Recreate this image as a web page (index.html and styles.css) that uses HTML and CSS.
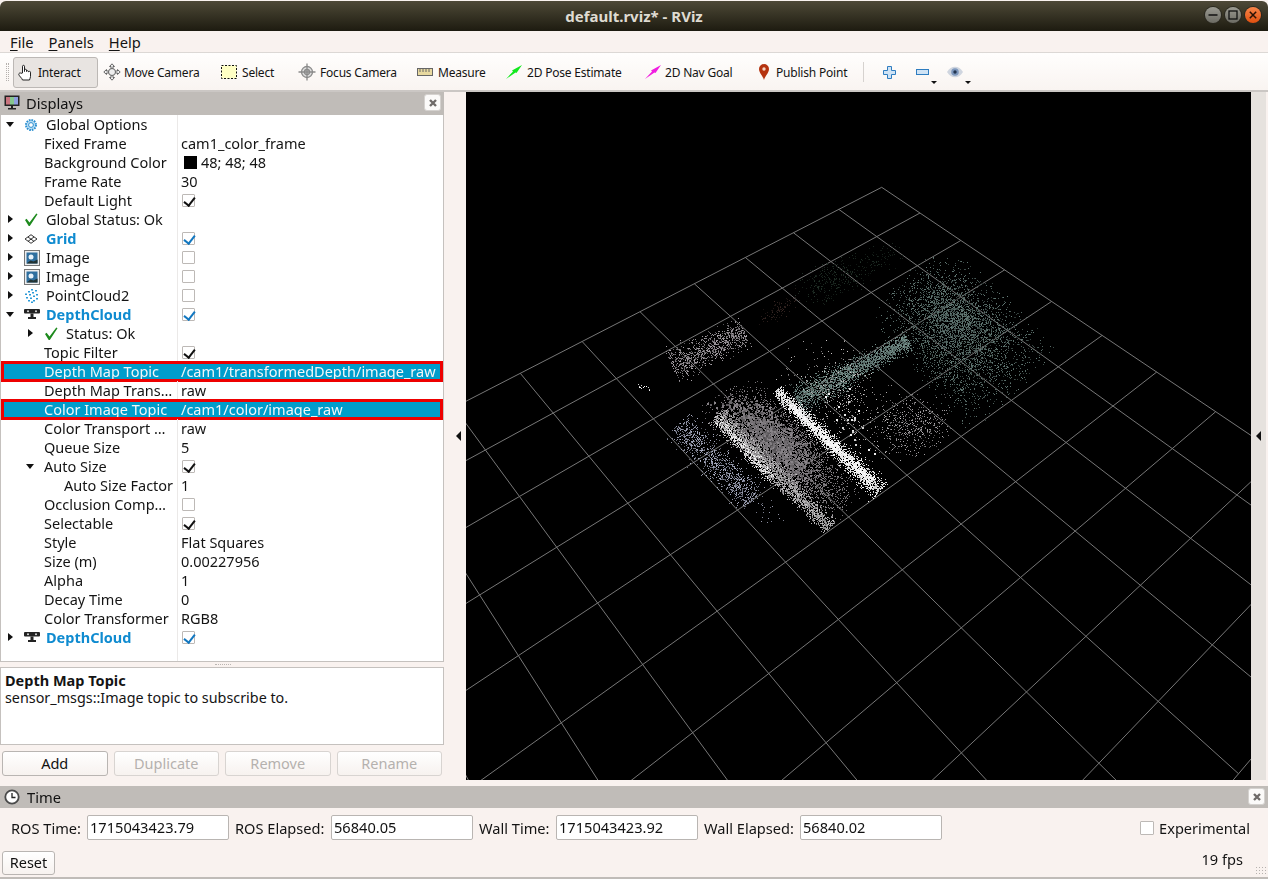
FILE: index.html
```html
<!DOCTYPE html>
<html lang="en">
<head>
<meta charset="utf-8">
<title>default.rviz* - RViz</title>
<link rel="stylesheet" href="styles.css">
</head>
<body>
<div class="window">
  <header class="titlebar">
    <div class="title">default.rviz* - RViz</div>
    <div class="wm">
      <span class="wmb"><svg width="16" height="16" viewBox="0 0 16 16"><path d="M3.5 8h9" stroke="#111" stroke-width="1.5"/></svg></span>
      <span class="wmb"><svg width="16" height="16" viewBox="0 0 16 16"><rect x="4" y="4" width="8" height="8" fill="none" stroke="#111" stroke-width="1.3"/></svg></span>
      <span class="wmb close"><svg width="16" height="16" viewBox="0 0 16 16"><path d="M4.8 4.8l6.4 6.4M11.2 4.8l-6.4 6.4" stroke="#2a1206" stroke-width="1.5"/></svg></span>
    </div>
  </header>
  <nav class="menubar">
    <span class="menu"><u>F</u>ile</span><span class="menu"><u>P</u>anels</span><span class="menu"><u>H</u>elp</span>
  </nav>
  <div class="toolbar">
    <span class="grip"></span>
    <div class="tool active t-interact"><svg width="16" height="17" viewBox="0 0 16 17"><path d="M4.5 9V2.2c0-1.2 2-1.2 2 0V7.500V6c0-1 2-1 2 0v1.500c0-1 2-1 2 0V8c0-.9 2-.9 2 .2v4.300c0 1.500-.8 2.200-1 3.500H4.500C4 14 1 12 .8 10.500c-.2-1.400 1.500-2 2.200-1.200z" fill="#fff" stroke="#222" stroke-width="1"/></svg><span>Interact</span></div>
    <div class="tool t-move"><svg width="18" height="18" viewBox="0 0 18 18"><g fill="#eee" stroke="#666" stroke-width="1"><path d="M9 .8l2.500 2.700H10V6H8V3.500H6.500zM9 17.200l2.500-2.700H10V12H8v2.500H6.500zM.8 9l2.700-2.500V8H6v2H3.500v1.500zM17.200 9l-2.700-2.500V8H12v2h2.500v1.500z"/><circle cx="9" cy="9" r="3.500"/></g></svg><span>Move Camera</span></div>
    <div class="tool t-select"><svg width="16" height="14" viewBox="0 0 16 14"><rect x=".5" y=".5" width="15" height="13" fill="#ffffc4" stroke="#111" stroke-dasharray="2 1.500"/></svg><span>Select</span></div>
    <div class="tool t-focus"><svg width="18" height="18" viewBox="0 0 18 18"><g fill="none" stroke="#8a8a8a" stroke-width="1.300"><circle cx="9" cy="9" r="5.500" fill="#ddd"/><path d="M9 .5v17M.5 9h17"/><circle cx="9" cy="9" r="2.500"/></g></svg><span>Focus Camera</span></div>
    <div class="tool t-measure"><svg width="16" height="8" viewBox="0 0 16 8"><rect x=".5" y=".5" width="15" height="7" fill="#e8d9a0" stroke="#666"/><path d="M3 1v3M6 1v3M9 1v3M12 1v3" stroke="#666"/></svg><span>Measure</span></div>
    <div class="tool t-pose"><svg width="16" height="14" viewBox="0 0 16 14"><path d="M0 14L7 6.500 6 5.500 16 0 10.500 8 9.500 7.500z" fill="#12e81e"/></svg><span>2D Pose Estimate</span></div>
    <div class="tool t-nav"><svg width="16" height="14" viewBox="0 0 16 14"><path d="M0 14L7 6.500 6 5.500 16 0 10.500 8 9.500 7.500z" fill="#f01ee0"/></svg><span>2D Nav Goal</span></div>
    <div class="tool t-pin"><svg width="10" height="16" viewBox="0 0 10 16"><path d="M5 16C4 12 0 9 0 5a5 5 0 0 1 10 0c0 4-4 7-5 11z" fill="#b5330f"/><circle cx="5" cy="5" r="1.700" fill="#f6d6c4"/></svg><span>Publish Point</span></div>
    <span class="tsep"></span>
    <div class="tb t-plus"><svg width="13" height="13" viewBox="0 0 13 13"><path d="M4.500.5h4v4h4v4h-4v4h-4v-4h-4v-4h4z" fill="#cfe3f5" stroke="#2f7dc0"/></svg></div>
    <div class="tb t-minus"><svg width="13" height="6" viewBox="0 0 13 6"><rect x=".5" y=".5" width="12" height="5" fill="#cfe3f5" stroke="#2f7dc0"/></svg><i class="drop"></i></div>
    <div class="tb t-eye"><svg width="16" height="12" viewBox="0 0 16 12"><path d="M0 6c4-7 12-7 16 0-4 7-12 7-16 0z" fill="#cfd5df"/><circle cx="8" cy="6" r="3.800" fill="#7d97bd"/><circle cx="8" cy="6" r="1.700" fill="#22344f"/></svg><i class="drop"></i></div>
  </div>

  <main class="main">
    <section class="left">
      <div class="dock-head">
        <svg class="dock-ico" width="16" height="15" viewBox="0 0 16 15"><rect x=".5" y=".5" width="15" height="10.500" fill="#222"/><rect x="2" y="2" width="4" height="7.500" fill="#c9747e"/><rect x="6" y="2" width="4" height="7.500" fill="#86c78e"/><rect x="10" y="2" width="4" height="7.500" fill="#8e9fe0"/><path d="M7 11h2v2h3v1.500H4V13h3z" fill="#222"/></svg>
        <span class="dock-title">Displays</span>
        <span class="dock-x"><svg width="10" height="10" viewBox="0 0 10 10"><path d="M2 2l6 6M8 2l-6 6" stroke="#6e6a68" stroke-width="2.400"/></svg></span>
      </div>
      <div class="tree">
        <div class="row"><div class="name lv0"><i class="tw down"></i><span class="ic"><svg width="14" height="14" viewBox="0 0 14 14"><circle cx="7" cy="7" r="5" fill="#bfe0f5" stroke="#2b8fd0" stroke-width="2" stroke-dasharray="1.600 1"/><circle cx="7" cy="7" r="2.400" fill="#fff" stroke="#2b8fd0"/></svg></span><span>Global Options</span></div><div class="val"></div></div>
        <div class="row"><div class="name prop">Fixed Frame</div><div class="val">cam1_color_frame</div></div>
        <div class="row"><div class="name prop">Background Color</div><div class="val"><i class="swatch"></i>48; 48; 48</div></div>
        <div class="row"><div class="name prop">Frame Rate</div><div class="val">30</div></div>
        <div class="row"><div class="name prop">Default Light</div><div class="val"><i class="cb on"></i></div></div>
        <div class="row"><div class="name lv0"><i class="tw right"></i><span class="ic"><svg class="okic" width="14" height="13" viewBox="0 0 14 13"><path d="M1 7l1.600-1.200 2.900 3.700L12.300.5l1.200.7L5.800 13H4.700z" fill="#1d8a1d"/></svg></span><span>Global Status: Ok</span></div><div class="val"></div></div>
        <div class="row"><div class="name lv0"><i class="tw right"></i><span class="ic"><svg width="14" height="10" viewBox="0 0 14 10"><path d="M7 .7l6 4.300-6 4.300L1 5zM4 3l6 4.300M10 3L4 7.300" fill="none" stroke="#333"/></svg></span><b class="on-name">Grid</b></div><div class="val"><i class="cb blue"></i></div></div>
        <div class="row"><div class="name lv0"><i class="tw right"></i><span class="ic"><svg width="16" height="16" viewBox="0 0 16 16"><rect x=".5" y=".5" width="15" height="15" fill="#eee" stroke="#777"/><rect x="2.500" y="2.500" width="11" height="11" fill="#2f6f9f"/><circle cx="7" cy="7" r="2.500" fill="#e8f2fa"/><path d="M2.500 13.500l4-3 3 1 4-2v4z" fill="#233"/></svg></span><span>Image</span></div><div class="val"><i class="cb"></i></div></div>
        <div class="row"><div class="name lv0"><i class="tw right"></i><span class="ic"><svg width="16" height="16" viewBox="0 0 16 16"><rect x=".5" y=".5" width="15" height="15" fill="#eee" stroke="#777"/><rect x="2.500" y="2.500" width="11" height="11" fill="#2f6f9f"/><circle cx="7" cy="7" r="2.500" fill="#e8f2fa"/><path d="M2.500 13.500l4-3 3 1 4-2v4z" fill="#233"/></svg></span><span>Image</span></div><div class="val"><i class="cb"></i></div></div>
        <div class="row"><div class="name lv0"><i class="tw right"></i><span class="ic"><svg width="15" height="14" viewBox="0 0 15 14" fill="#2a9ad8"><rect x="7" y="0" width="2" height="1.500"/><rect x="11" y="1" width="2" height="1.500"/><rect x="4" y="2" width="2" height="1.500"/><rect x="8" y="3" width="2" height="1.500"/><rect x="1" y="4.500" width="2" height="1.500"/><rect x="5" y="5" width="2" height="1.500"/><rect x="12" y="5" width="2" height="1.500"/><rect x="9" y="6.500" width="2" height="1.500"/><rect x="2" y="8" width="2" height="1.500"/><rect x="6" y="8.500" width="2" height="1.500"/><rect x="12" y="9" width="2" height="1.500"/><rect x="4" y="11" width="2" height="1.500"/><rect x="9" y="11" width="2" height="1.500"/><rect x="7" y="12.500" width="2" height="1.500"/></svg></span><span>PointCloud2</span></div><div class="val"><i class="cb"></i></div></div>
        <div class="row"><div class="name lv0"><i class="tw down"></i><span class="ic"><svg width="16" height="11" viewBox="0 0 16 11"><rect x="0" y="0" width="16" height="4.500" rx="1" fill="#222"/><circle cx="4" cy="2.200" r="1" fill="#ddd"/><circle cx="12" cy="2.200" r="1" fill="#ddd"/><path d="M6.500 4.500h3V8H12v2H4V8h2.500z" fill="#222"/></svg></span><b class="on-name">DepthCloud</b></div><div class="val"><i class="cb blue"></i></div></div>
        <div class="row"><div class="name lv1"><i class="tw right"></i><span class="ic"><svg class="okic" width="14" height="13" viewBox="0 0 14 13"><path d="M1 7l1.600-1.200 2.900 3.700L12.300.5l1.200.7L5.800 13H4.700z" fill="#1d8a1d"/></svg></span><span>Status: Ok</span></div><div class="val"></div></div>
        <div class="row"><div class="name prop">Topic Filter</div><div class="val"><i class="cb on"></i></div></div>
        <div class="row sel"><div class="name prop">Depth Map Topic</div><div class="val">/cam1/transformedDepth/image_raw</div></div>
        <div class="row"><div class="name prop">Depth Map Trans…</div><div class="val">raw</div></div>
        <div class="row sel"><div class="name prop">Color Image Topic</div><div class="val">/cam1/color/image_raw</div></div>
        <div class="row"><div class="name prop">Color Transport …</div><div class="val">raw</div></div>
        <div class="row"><div class="name prop">Queue Size</div><div class="val">5</div></div>
        <div class="row"><div class="name lv1"><i class="tw down"></i><span class="noic">Auto Size</span></div><div class="val"><i class="cb on"></i></div></div>
        <div class="row"><div class="name prop2">Auto Size Factor</div><div class="val">1</div></div>
        <div class="row"><div class="name prop">Occlusion Comp…</div><div class="val"><i class="cb"></i></div></div>
        <div class="row"><div class="name prop">Selectable</div><div class="val"><i class="cb on"></i></div></div>
        <div class="row"><div class="name prop">Style</div><div class="val">Flat Squares</div></div>
        <div class="row"><div class="name prop">Size (m)</div><div class="val">0.00227956</div></div>
        <div class="row"><div class="name prop">Alpha</div><div class="val">1</div></div>
        <div class="row"><div class="name prop">Decay Time</div><div class="val">0</div></div>
        <div class="row"><div class="name prop">Color Transformer</div><div class="val">RGB8</div></div>
        <div class="row"><div class="name lv0"><i class="tw right"></i><span class="ic"><svg width="16" height="11" viewBox="0 0 16 11"><rect x="0" y="0" width="16" height="4.500" rx="1" fill="#222"/><circle cx="4" cy="2.200" r="1" fill="#ddd"/><circle cx="12" cy="2.200" r="1" fill="#ddd"/><path d="M6.500 4.500h3V8H12v2H4V8h2.500z" fill="#222"/></svg></span><b class="on-name">DepthCloud</b></div><div class="val"><i class="cb blue"></i></div></div>
        <div class="row fill"><div class="name"></div><div class="val"></div></div>
      </div>
      <div class="vgrip"></div>
      <div class="desc"><b>Depth Map Topic</b><br>sensor_msgs::Image topic to subscribe to.</div>
      <div class="btns">
        <button class="btn">Add</button>
        <button class="btn off">Duplicate</button>
        <button class="btn off">Remove</button>
        <button class="btn off">Rename</button>
      </div>
    </section>
    <div class="hleft"><i class="ar-l"></i></div>
    <canvas id="view" width="785" height="688"></canvas>
    <div class="hright"><i class="ar-l"></i></div>
  </main>

  <section class="time">
    <div class="time-head">
      <svg width="16" height="16" viewBox="0 0 16 16"><circle cx="8" cy="8" r="6.700" fill="#fff" stroke="#4a4a4a" stroke-width="1.800"/><path d="M8 4v4.500h3.500" fill="none" stroke="#222" stroke-width="1.300"/></svg>
      <span class="dock-title">Time</span>
      <span class="dock-x"><svg width="10" height="10" viewBox="0 0 10 10"><path d="M2 2l6 6M8 2l-6 6" stroke="#6e6a68" stroke-width="2.400"/></svg></span>
    </div>
    <div class="time-row">
      <label class="tl">ROS Time:</label><input class="ti" value="1715043423.79">
      <label class="tl wide">ROS Elapsed:</label><input class="ti" value="56840.05">
      <label class="tl wall">Wall Time:</label><input class="ti" value="1715043423.92">
      <label class="tl wide">Wall Elapsed:</label><input class="ti" value="56840.02">
      <span class="exp"><i class="cb big"></i>Experimental</span>
    </div>
    <div class="time-foot">
      <button class="btn reset">Reset</button>
      <span class="fps">19 fps</span>
      <i class="sizegrip"></i>
    </div>
  </section>
</div>
<script src="view.js"></script>
</body>
</html>
```
FILE: styles.css
```css
* { box-sizing: border-box; }
html, body { margin: 0; height: 879px; overflow: hidden; background: #2b2a22; }
body { font-family: "Noto Sans", "Open Sans", sans-serif; font-size: 14.500px; color: #141414; }
.window { width: 1268px; height: 879px; display: flex; flex-direction: column; background: #f9f2ef; }

.titlebar { height: 30px; flex: none; display: flex; align-items: center; justify-content: center; position: relative; border-radius: 6px 6px 0 0; background: linear-gradient(#4e4938, #3f3b2b 30%, #1d1b10); margin-top: 1px; }
.title { font-weight: 700; font-size: 15px; color: #dfdbd2; }
.wm { position: absolute; right: 7px; top: 6px; display: flex; gap: 4px; }
.wmb { width: 16px; height: 16px; border-radius: 50%; background: linear-gradient(#9b9a92, #6c6b63); box-shadow: 0 0 0 1px #2a2820; }
.wmb.close { background: linear-gradient(#f8854a, #e0500f); }
.wmb svg { display: block; }

.menubar { height: 22px; flex: none; display: flex; align-items: center; padding-left: 10px; gap: 15px; border-bottom: 1px solid #dcd8d5; font-size: 14.700px; }
.menu u { text-underline-offset: 2px; }

.toolbar { height: 39px; flex: none; display: flex; align-items: center; position: relative; background: linear-gradient(#fffefd, #f9f4f1); border-bottom: 2px solid #cbc7c4; font-size: 12px; letter-spacing: -.2px; padding-top: 1px; }
.grip { width: 3px; height: 18px; margin-left: 6px; margin-right: 4px; border-left: 1px dotted #b5b1ae; border-right: 1px dotted #b5b1ae; }
.tool { display: flex; align-items: center; gap: 3px; height: 31px; white-space: nowrap; }
.tool.active { background: #e8e4e1; border: 1px solid #bcb8b5; border-radius: 3px; width: 85px; padding-left: 4px; }
.t-interact { gap: 4px; }
.t-move { margin-left: 5px; width: 118px; }
.t-select { width: 77px; gap: 5px; }
.t-focus { width: 119px; gap: 4px; }
.t-measure { width: 89px; gap: 5px; }
.t-pose { width: 139px; gap: 5px; }
.t-nav { width: 109px; gap: 4px; }
.t-pin { margin-left: 5px; gap: 7px; width: 104px; }
.tsep { width: 1px; height: 20px; background: #d6d2cf; }
.tb { position: relative; height: 20px; display: flex; align-items: center; }
.t-plus { margin-left: 19px; }
.t-minus { margin-left: 20px; }
.t-eye { margin-left: 18px; }
.drop { position: absolute; right: -8px; bottom: -2px; border: 3px solid transparent; border-top: 3px solid #111; border-bottom: 0; width: 0; height: 0; border-left-width: 3.500px; border-right-width: 3.500px; }

.main { flex: 1; display: flex; min-height: 0; }
.left { width: 444px; flex: none; display: flex; flex-direction: column; }
.dock-head, .time-head { height: 23px; flex: none; display: flex; align-items: center; background: #c0bcb8; position: relative; padding-left: 4px; }
.dock-head { padding-bottom: 2px; }
.dock-title { margin-left: 6px; font-size: 14.700px; color: #111; }
.dock-x { position: absolute; right: 3px; top: 2px; width: 17px; height: 17px; background: #fbfaf9; border: 1px solid #d5d2cf; border-radius: 3px; display: flex; align-items: center; justify-content: center; }

.tree { flex: 1; display: flex; flex-direction: column; background: #fff; border: 1px solid #c5c1be; border-width: 0 1px 1px 1px; min-height: 0; }
.row { height: 19px; flex: none; display: grid; grid-template-columns: 177px 1fr; position: relative; line-height: 19px; white-space: nowrap; }
.row.fill { flex: 1; }
.name { border-right: 1px solid #ebe9e8; display: flex; align-items: center; overflow: hidden; }
.val { padding-left: 3px; display: flex; align-items: center; }
.lv0 { padding-left: 2px; }
.lv1 { padding-left: 22px; }
.prop { padding-left: 43px; }
.prop2 { padding-left: 63px; }
.tw { width: 14px; height: 19px; flex: none; position: relative; }
.tw::after { content: ""; position: absolute; width: 0; height: 0; }
.tw.right::after { left: 5px; top: 5px; border-left: 5px solid #111; border-top: 4.500px solid transparent; border-bottom: 4.500px solid transparent; }
.tw.down::after { left: 3px; top: 7px; border-top: 5px solid #111; border-left: 4.500px solid transparent; border-right: 4.500px solid transparent; }
.ic { width: 29px; flex: none; display: flex; align-items: center; padding-left: 7px; }
.ic svg { display: block; }
.noic { margin-left: 7px; }
.on-name { color: #0f8bd0; font-weight: 700; }
.sel { background: #009dcb; color: #f2f7f9; }
.sel .name { border-right-color: transparent; }
.sel::after { content: ""; position: absolute; left: 0; right: 0; top: -1px; bottom: -1px; border: 3px solid #ee0000; }
.cb { width: 13px; height: 13px; display: inline-block; border: 1px solid #bdb9b6; background: #fff; position: relative; flex: none; margin-left: 1px; border-radius: 1px; }
.cb.on::after, .cb.blue::after { content: ""; position: absolute; left: 3px; top: 0; width: 5px; height: 9px; border: solid #111; border-width: 0 2px 2px 0; transform: rotate(38deg); }
.cb.blue::after { border-color: #1277c0; }
.swatch { width: 13px; height: 13px; background: #000; margin: 0 4px 0 3px; flex: none; }

.vgrip { height: 5px; flex: none; position: relative; }
.vgrip::after { content: ""; position: absolute; left: 215px; top: 2px; width: 16px; border-top: 1px dotted #bab6b3; }
.desc { height: 78px; flex: none; background: #fff; border: 1px solid #c5c1be; padding: 4px 4px; line-height: 17px; font-size: 14.350px; }
.desc b { font-size: 14.500px; }
.btns { display: flex; padding: 6px 2px 0; gap: 6px; flex: none; height: 35px; }
.btn { font: inherit; font-size: 14.500px; color: #111; background: linear-gradient(#fff, #f7f2ef); border: 1px solid #b9b5b2; border-radius: 3px; height: 25px; flex: 1; padding: 0 0 2px; }
.btn.off { color: #b5b1ae; border-color: #d8d4d1; }

.hleft { width: 22px; flex: none; display: flex; align-items: center; justify-content: center; padding-left: 6px; }
.hright { flex: 1; display: flex; align-items: center; justify-content: center; background: #e6e2de; margin-right: 2px; }
.ar-l { width: 0; height: 0; border-right: 5px solid #111; border-top: 5px solid transparent; border-bottom: 5px solid transparent; }
#view { width: 785px; height: 688px; display: block; flex: none; background: #000; }

.time { flex: none; height: 99px; padding-top: 6px; font-size: 14.600px; }
.time-head { height: 22px; }
.time-head .dock-title { margin-left: 7px; }
.time-row { display: flex; align-items: center; height: 25px; margin-top: 7px; padding-left: 11px; position: relative; }
.tl { width: 71px; margin-right: 5px; white-space: nowrap; flex: none; }
.tl.wall { width: 72px; }
.tl.wide { width: 90px; margin-right: 6px; }
.ti { width: 142px; height: 25px; margin-right: 6px; flex: none; border: 1px solid #b9b5b2; border-radius: 2px; background: #fff; font: inherit; padding: 0 2px 2px 2px; color: #111; }
.exp { margin-left: auto; margin-right: 18px; display: flex; align-items: center; }
.cb.big { width: 14px; height: 14px; margin: 0 5px 0 0; }
.time-foot { height: 39px; display: flex; align-items: flex-end; padding: 0 25px 2px 2px; justify-content: space-between; position: relative; border-bottom: 2px solid #c0bcb8; }
.reset { flex: none; width: 53px; height: 24px; }
.fps { align-self: flex-start; margin-top: 10px; line-height: 19px; }
.sizegrip { position: absolute; right: 2px; bottom: 1px; width: 11px; height: 10px; background: radial-gradient(circle, #b5b1ae 0.800px, transparent 1px) 0 0 / 3px 3px; }
```
FILE: view.js
```js
(function () {
  var cv = document.getElementById('view');
  var ctx = cv.getContext('2d');
  var OX = 466, OY = 92;
  ctx.fillStyle = '#000';
  ctx.fillRect(0, 0, cv.width, cv.height);

  // Grid: perspective mapping fitted to four crossings, 7 cells apart
  var q = [[881.7, 187.3], [1215.7, 411.7], [826, 742.7], [520.3, 373.3]];
  var dx1 = q[1][0] - q[2][0], dx2 = q[3][0] - q[2][0], sx = q[0][0] - q[1][0] + q[2][0] - q[3][0];
  var dy1 = q[1][1] - q[2][1], dy2 = q[3][1] - q[2][1], sy = q[0][1] - q[1][1] + q[2][1] - q[3][1];
  var den = dx1 * dy2 - dx2 * dy1;
  var g = (sx * dy2 - dx2 * sy) / den, h = (dx1 * sy - sx * dy1) / den;
  var a = q[1][0] - q[0][0] + g * q[1][0], b = q[3][0] - q[0][0] + h * q[3][0], c = q[0][0];
  var d = q[1][1] - q[0][1] + g * q[1][1], e = q[3][1] - q[0][1] + h * q[3][1], f = q[0][1];
  function P(i, j) {
    var u = i / 7, v = j / 7, w = g * u + h * v + 1;
    return [(a * u + b * v + c) / w - OX, (d * u + e * v + f) / w - OY];
  }
  ctx.strokeStyle = '#777';
  ctx.lineWidth = 1;
  for (var n = 0; n <= 10; n++) {
    var p = P(n, 0), r = P(n, 10);
    ctx.beginPath(); ctx.moveTo(p[0], p[1]); ctx.lineTo(r[0], r[1]); ctx.stroke();
    p = P(0, n); r = P(10, n);
    ctx.beginPath(); ctx.moveTo(p[0], p[1]); ctx.lineTo(r[0], r[1]); ctx.stroke();
  }

  // Point cloud: seeded so each run gives the same picture
  var s = 12345;
  function R() { s = (s * 1664525 + 1013904223) >>> 0; return s / 4294967296; }
  function G() { return R() + R() + R() + R() - 2; }
  function dot(x, y, col, sz) {
    ctx.fillStyle = col;
    ctx.fillRect(Math.round(x - OX), Math.round(y - OY), sz, sz);
  }
  function shade(rgb, v) {
    return 'rgb(' + Math.round(rgb[0] * v) + ',' + Math.round(rgb[1] * v) + ',' + Math.round(rgb[2] * v) + ')';
  }
  // a band runs from (x0,y0) to (x1,y1) with half-width w0..w1
  function band(x0, y0, x1, y1, w0, w1, num, rgb, lo, hi, sz) {
    var l = Math.hypot(x1 - x0, y1 - y0), nx = -(y1 - y0) / l, ny = (x1 - x0) / l;
    for (var k = 0; k < num; k++) {
      var t = R(), w = w0 + (w1 - w0) * t, o = G() * w;
      dot(x0 + (x1 - x0) * t + nx * o, y0 + (y1 - y0) * t + ny * o, shade(rgb, lo + (hi - lo) * R()), sz);
    }
  }
  // a quad of scattered points, thicker in the middle and fading at its edges
  function quad(A, B, C, D, num, rgb, lo, hi, sz) {
    for (var k = 0; k < num; k++) {
      var u = (R() + R()) / 2, v = (R() + R()) / 2;
      var x = (A[0] * (1 - u) + B[0] * u) * (1 - v) + (D[0] * (1 - u) + C[0] * u) * v;
      var y = (A[1] * (1 - u) + B[1] * u) * (1 - v) + (D[1] * (1 - u) + C[1] * u) * v;
      dot(x, y, shade(rgb, lo + (hi - lo) * R()), sz);
    }
  }
  var TEAL = [150, 185, 178], GREY = [205, 198, 205], BLUE = [195, 200, 225], GREEN = [110, 160, 130], RED = [170, 120, 110];

  // faint far patches
  quad([785, 268], [875, 245], [875, 290], [800, 315], 300, GREEN, .12, .32, 1);
  quad([750, 318], [795, 285], [805, 305], [760, 332], 90, RED, .15, .35, 1);
  quad([855, 252], [905, 232], [905, 268], [855, 282], 70, GREEN, .12, .28, 1);
  // upper-left blob
  band(672, 366, 745, 332, 14, 12, 900, GREY, .42, .85, 1);
  quad([632, 381], [652, 386], [652, 392], [634, 388], 14, [255, 255, 255], .7, 1, 1);
  // big teal blob
  quad([860, 310], [945, 240], [1065, 345], [970, 440], 3800, TEAL, .3, .68, 1);
  quad([905, 305], [950, 262], [1010, 335], [965, 365], 700, TEAL, .35, .7, 1);
  // teal diagonal
  band(797, 401, 908, 340, 12, 7, 2400, TEAL, .42, .82, 1);
  // sparse speckle right of the bright bar
  quad([750, 360], [850, 320], [920, 430], [850, 490], 480, [225, 220, 220], .4, .95, 1);
  quad([865, 395], [950, 390], [955, 450], [880, 470], 480, [220, 215, 220], .35, .8, 1);
  quad([800, 400], [850, 370], [890, 470], [870, 500], 25, [255, 255, 255], .8, 1, 2);
  // central grey mass
  quad([690, 405], [755, 372], [870, 490], [825, 535], 3600, GREY, .4, .72, 1);
  quad([700, 400], [755, 385], [830, 470], [790, 505], 900, GREY, .4, .7, 2);
  // lower-left bluish band
  band(678, 424, 752, 500, 13, 13, 1100, BLUE, .45, .9, 1);
  quad([740, 490], [775, 495], [795, 530], [760, 525], 26, BLUE, .5, .8, 1);
  // light bar on the left
  band(716, 415, 830, 527, 9, 7, 2200, [220, 218, 220], .55, .92, 1);
  band(718, 420, 772, 478, 5, 5, 350, [255, 255, 255], .75, 1, 1);
  // bright bar
  band(776, 390, 880, 491, 5, 9, 2200, [255, 255, 255], .7, 1, 1);
  band(790, 405, 872, 482, 3, 4, 800, [255, 255, 255], .9, 1, 1);
})();
```
